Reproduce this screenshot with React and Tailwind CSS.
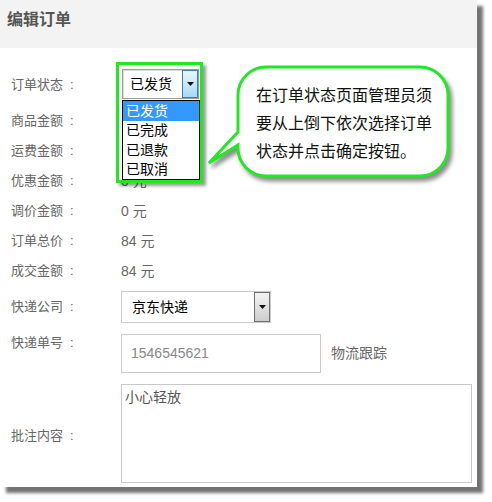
import React from "react";

const FONT = { fontFamily: '"Liberation Sans", "Noto Sans CJK SC", sans-serif' };

function Arrow({ className }) {
  return (
    <svg width="7" height="4" viewBox="0 0 7 4" className={className}>
      <path d="M0 0 H7 L3.5 4 Z" fill="#111" />
    </svg>
  );
}

function Row({ label, children, className = "", labelClass = "" }) {
  return (
    <div className={"flex " + className}>
      <div className={"w-[110px] shrink-0 text-[13px] text-[#666] " + labelClass}>
        {label}
        <span className="ml-[7px]">:</span>
      </div>
      {children}
    </div>
  );
}

function Val({ children }) {
  return <span className="text-[14px] text-[#666]">{children}</span>;
}

export default function App() {
  return (
    <div className="relative w-[492px] h-[502px] bg-white overflow-hidden" style={FONT}>
      <div className="w-[477px] h-[487px] bg-white shadow-[6px_6px_3px_rgba(0,0,0,0.55)]">
        <div className="h-[48px] bg-[#f3f3f3] pl-[7px] pt-[9px] text-[16px] leading-[22px] font-bold text-[#555]">
          编辑订单
        </div>
        <div className="pl-[11px]">
          <Row label="订单状态" className="mt-[22px] h-[30px] items-center" />
          <Row label="商品金额" className="mt-[6px] h-[30px] items-center">
            <Val>84 元</Val>
          </Row>
          <Row label="运费金额" className="h-[30px] items-center">
            <Val>0 元</Val>
          </Row>
          <Row label="优惠金额" className="h-[30px] items-center">
            <Val>0 元</Val>
          </Row>
          <Row label="调价金额" className="h-[30px] items-center">
            <Val>0 元</Val>
          </Row>
          <Row label="订单总价" className="h-[30px] items-center">
            <Val>84 元</Val>
          </Row>
          <Row label="成交金额" className="h-[30px] items-center">
            <Val>84 元</Val>
          </Row>
          <Row label="快递公司" className="mt-[5px] h-[32px] items-center">
            <div className="w-[150px] h-[32px] border border-[#ccc] flex items-center pl-[10px] text-[14px] text-black">
              <span>京东快递</span>
              <div className="ml-auto w-[16px] h-[30px] border border-[#707070] bg-gradient-to-b from-[#f4f4f4] to-[#cdcdcd] flex items-center justify-center">
                <Arrow />
              </div>
            </div>
          </Row>
          <Row label="快递单号" className="mt-[11px] h-[39px] items-start" labelClass="leading-[18px]">
            <div className="w-[200px] h-[39px] border border-[#ccc] flex items-center pl-[9px] text-[14px] text-[#888]">
              1546545621
            </div>
            <span className="self-center ml-[10px] text-[14px] text-[#666]">物流跟踪</span>
          </Row>
          <Row label="批注内容" className="mt-[11px] h-[99px] items-center" labelClass="pt-[4px]">
            <div className="w-[351px] h-[99px] border border-[#c8c8c8] pl-[3px] pt-[3px] text-[14px] leading-[18px] text-[#555]">
              小心轻放
            </div>
          </Row>
        </div>
      </div>

      {/* highlighted dropdown annotation */}
      <div className="absolute left-[116px] top-[62px] w-[87px] h-[121px] border-[3px] border-[#1fea1f] bg-white shadow-[3px_3px_3px_rgba(0,0,0,0.4)]">
        <div className="absolute left-[3px] top-[4px] w-[77px] h-[30px] border border-[#9a9a9a] bg-white shadow-[inset_1px_1px_1px_rgba(0,0,0,0.15)] flex items-center pl-[7px] text-[14px] text-black">
          <span>已发货</span>
          <div className="ml-auto w-[16px] h-[28px] border border-[#3c7fb1] bg-gradient-to-b from-[#eaf6fd] to-[#a7d9f5] flex items-center justify-center">
            <Arrow />
          </div>
        </div>
        <div className="absolute left-[3px] top-[35px] w-[78px] border border-black bg-white text-[14px] leading-[19px] text-black">
          <div className="h-[20px] bg-[#3399ff] text-white pl-[3px] flex items-center">已发货</div>
          <div className="h-[19px] pl-[3px] flex items-center">已完成</div>
          <div className="h-[20px] pl-[3px] flex items-center">已退款</div>
          <div className="h-[19px] pl-[3px] flex items-center">已取消</div>
        </div>
      </div>

      {/* callout bubble */}
      <svg
        className="absolute left-[200px] top-[55px] drop-shadow-[3px_4px_2px_rgba(0,0,0,0.45)]"
        width="262"
        height="135"
        viewBox="0 0 262 135"
      >
        <path
          d="M66 12 H220 A28 28 0 0 1 248 40 V93 A28 28 0 0 1 220 121 H66 A28 28 0 0 1 38 93 V90 L9 108 L38 77 V40 A28 28 0 0 1 66 12 Z"
          fill="white"
          stroke="#1fea1f"
          strokeWidth="3"
          strokeLinejoin="miter"
        />
      </svg>
      <div className="absolute left-[256px] top-[82px] text-[16px] leading-[28px] text-[#111] whitespace-nowrap">
        <div>在订单状态页面管理员须</div>
        <div>要从上倒下依次选择订单</div>
        <div>状态并点击确定按钮。</div>
      </div>
    </div>
  );
}
